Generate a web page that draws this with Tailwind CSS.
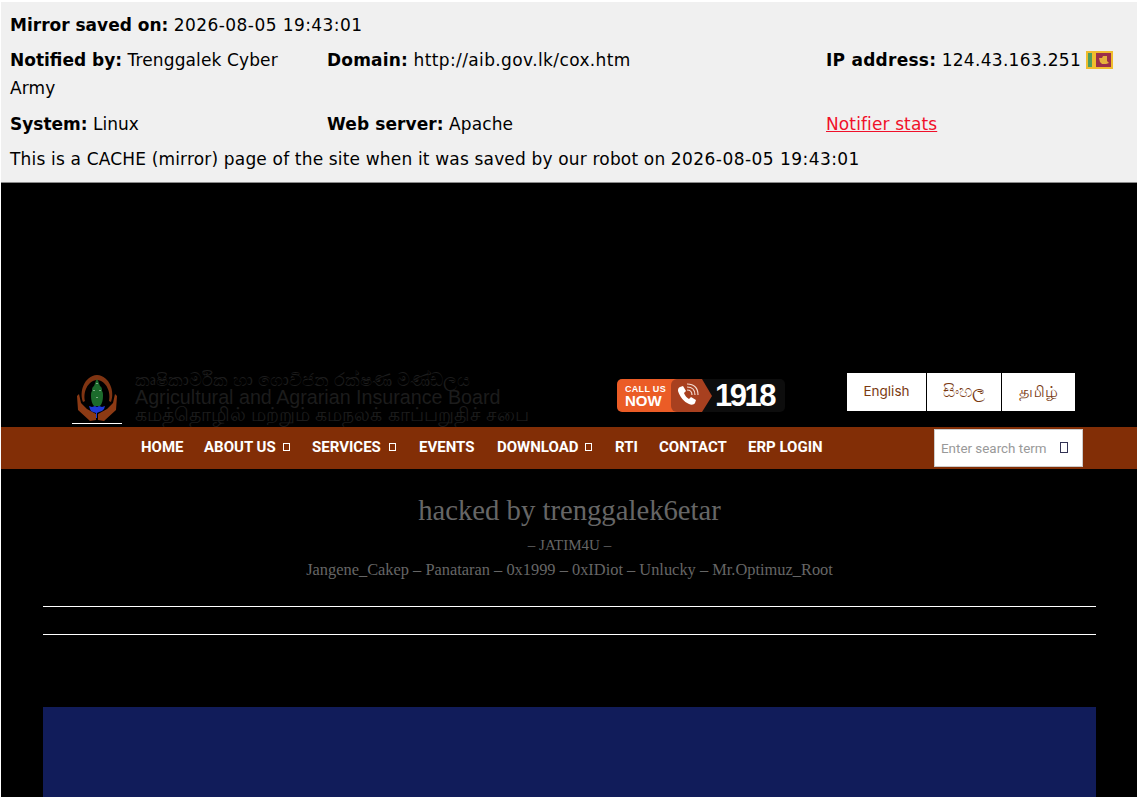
<!DOCTYPE html>
<html lang="en">
<head>
  <meta charset="UTF-8">
  <meta name="viewport" content="width=device-width, initial-scale=1.0">
  <title>Mirror page</title>
  <script src="https://cdn.jsdelivr.net/npm/@tailwindcss/browser@4"></script>
</head>
<body class="bg-white overflow-hidden">
  <div class="h-[797px] overflow-hidden pt-[2px] px-px">
    <!-- mirror info panel -->
    <div class="h-[181px] bg-[#f0f0f0] border-b border-[#8a8a8a] pl-[9px] pt-[9px] text-[17px] leading-[28px] text-black font-['DejaVu_Sans',sans-serif]">
      <p class="h-[35px]"><b>Mirror saved on:</b> <span class="tracking-[0.43px]">2026-08-05 19:43:01</span></p>
      <div class="flex h-[64px]">
        <p class="w-[317px] pr-[40px]"><b>Notified by:</b> <span class="tracking-[0.12px]">Trenggalek Cyber Army</span></p>
        <p class="w-[499px]"><b class="tracking-[0.2px]">Domain:</b> <span class="tracking-[0.38px]">http://aib.gov.lk/cox.htm</span></p>
        <p class="whitespace-nowrap flex items-start"><span><b class="tracking-[0.25px]">IP address:</b> <span class="tracking-[0.3px]">124.43.163.251</span></span>
          <svg class="ml-[5px] mt-[5px]" width="27" height="18" viewBox="0 0 27 18">
            <rect width="27" height="18" fill="#f0bd2e"/>
            <rect x="2" y="2" width="4" height="14" fill="#4f9c5e"/>
            <rect x="10" y="2" width="15" height="14" fill="#9b2f4a"/>
            <path d="M13 7h3l1-2h4v5l2 2-3 1h-4l-2-2z" fill="#e5b23c"/>
          </svg>
        </p>
      </div>
      <div class="flex h-[35px]">
        <p class="w-[317px]"><b>System:</b> Linux</p>
        <p class="w-[499px]"><b class="tracking-[0.1px]">Web server:</b> <span class="tracking-[0.1px]">Apache</span></p>
        <a href="#" class="text-[#f0102a] underline tracking-[0.12px]">Notifier stats</a>
      </div>
      <p><span class="tracking-[0.17px]">This is a CACHE (mirror) page of the site when it was saved by our robot on</span> <span class="tracking-[0.45px]">2026-08-05 19:43:01</span></p>
    </div>

    <!-- defaced page -->
    <div class="h-[620px] bg-black pt-[190px]">
      <div class="flex h-[54px] pl-[71px]">
        <div class="w-[50px] h-[51px] border-b border-white">
          <svg width="50" height="50" viewBox="0 0 50 50">
            <path d="M11 29C7 19 12 3 25 2c13 1 18 17 14 27l-2-1c2-8-2-20-12-21-10 1-14 13-12 21z" fill="#7f3412"/>
            <path d="M5 23l1 14 12 11 6-1v-6l-9-5-6-6-2-9zM45 23l-1 14-12 11-6-1v-6l9-5 6-6 2-9z" fill="#8c3a14"/>
            <path d="M25 6c-2 3-2 5-3 7-2 1-2 3-2 5-1 1-1 3-1 5 0 4 1 8 3 10h6c2-2 3-6 3-10 0-2 0-4-1-5 0-2 0-4-2-5-1-2-1-4-3-7z" fill="#1c6b2c"/>
            <path d="M17 33l3 1 3-1 2 1 2-1 3 1 3-1-1 3-2 2-3 1-2 1v5h-1v-5l-3-1-2-1-1-2z" fill="#1f3bd8"/>
            <path d="M25 10v1M22 17v1M28 17v1M25 24v1" stroke="#dfe8df" stroke-width="1"/>
          </svg>
        </div>
        <div class="w-[410px] ml-[13px] h-[50px] font-['Liberation_Sans',sans-serif] text-[#1c1c1c] whitespace-nowrap">
          <p class="h-[16px] leading-[14px] text-[18px]">කෘෂිකාර්මික හා ගොවිජන රක්ෂණ මණ්ඩලය</p>
          <p class="h-[18px] leading-[16px] text-[19.7px]">Agricultural and Agrarian Insurance Board</p>
          <p class="h-[18px] leading-[16px] text-[18.9px]">கமத்தொழில் மற்றும் கமநலக் காப்பறுதிச் சபை</p>
        </div>
        <div class="ml-[72px] w-[168px] h-[33px] mt-[6px] flex rounded-[5px] bg-[#0d0d0d] relative">
          <div class="w-[60px] bg-[#eb5c26] rounded-l-[5px] font-['Liberation_Sans',sans-serif] font-bold text-white pl-[8px] pt-[5px]">
            <p class="text-[9px] leading-[10px] tracking-[0.3px]">CALL US</p>
            <p class="text-[15px] leading-[14px]">NOW</p>
          </div>
          <svg class="absolute left-[54px] top-0" width="42" height="33" viewBox="0 0 42 33">
            <path d="M6 0h25l10 17-10 16H6a6 6 0 0 1-6-6V6a6 6 0 0 1 6-6z" fill="#a8401f"/>
            <path d="M9 8l3-1 3 5-2 2c1 3 3 5 5 6l2-2 5 3-1 3c-1 2-4 2-6 1-5-2-9-7-11-13 0-2 0-3 2-4z" fill="#fff"/>
            <path d="M16 11c3 0 5 2 5 5M16 8c5 0 8 3 8 8M16 5c7 0 11 4 11 11" fill="none" stroke="#f3d9cf" stroke-width="1.2"/>
          </svg>
          <span class="ml-[38px] text-[31px] leading-[34px] tracking-[-2.5px] font-bold text-white font-['Liberation_Sans',sans-serif]">1918</span>
        </div>
        <div class="ml-[62px] flex gap-px h-[38px] text-[#7a3a12] font-['Inter',sans-serif]">
          <a href="#" class="w-[79px] bg-white flex items-center justify-center pb-[2px] text-[13.5px]">English</a>
          <a href="#" class="w-[74px] bg-white flex items-center justify-center pb-[2px] text-[16.5px]">සිංහල</a>
          <a href="#" class="w-[73px] bg-white flex items-center justify-center pb-[2px] text-[16px]">தமிழ்</a>
        </div>
      </div>

      <nav class="h-[42px] bg-[#822e06] flex items-center pl-[140px] pr-[54px] font-['Roboto',sans-serif] font-bold text-[15px] text-white whitespace-nowrap">
        <a href="#" class="w-[63px] pb-[2px]">HOME</a>
        <a href="#" class="w-[108px] pb-[2px] flex items-center">ABOUT US<span class="ml-[7px] w-[7px] h-[8px] border border-white"></span></a>
        <a href="#" class="w-[107px] pb-[2px] flex items-center">SERVICES<span class="ml-[8px] w-[7px] h-[8px] border border-white"></span></a>
        <a href="#" class="w-[78px] pb-[2px]">EVENTS</a>
        <a href="#" class="w-[118px] pb-[2px] flex items-center">DOWNLOAD<span class="ml-[7px] w-[7px] h-[8px] border border-white"></span></a>
        <a href="#" class="w-[44px] pb-[2px]">RTI</a>
        <a href="#" class="w-[89px] pb-[2px]">CONTACT</a>
        <a href="#" class="pb-[2px]">ERP LOGIN</a>
        <div class="ml-auto w-[149px] h-[38px] bg-white border border-[#cccccc] flex items-center pl-[6px] font-normal">
          <input type="text" placeholder="Enter search term" class="w-[119px] mt-[2px] text-[13.4px] outline-none placeholder:text-[#999999]">
          <span class="w-[8px] h-[11px] mb-[2px] border border-[#333355]"></span>
        </div>
      </nav>

      <div class="ml-[42px] mr-[41px] text-center text-[#666666] font-['Liberation_Serif',serif]">
        <h1 class="pt-[25px] text-[28.7px] leading-[32px]">hacked by trenggalek6etar</h1>
        <p class="mt-[7px] text-[15px] leading-[24px]">– JATIM4U –</p>
        <p class="mt-[0px] text-[16.4px] leading-[26px]">Jangene_Cakep – Panataran – 0x1999 – 0xIDiot – Unlucky – Mr.Optimuz_Root</p>
        <hr class="mt-[23px] border-white">
        <hr class="mt-[27px] border-white">
        <div class="mt-[72px] h-[120px] bg-[#111c5a]"></div>
      </div>
    </div>
  </div>
</body>
</html>
